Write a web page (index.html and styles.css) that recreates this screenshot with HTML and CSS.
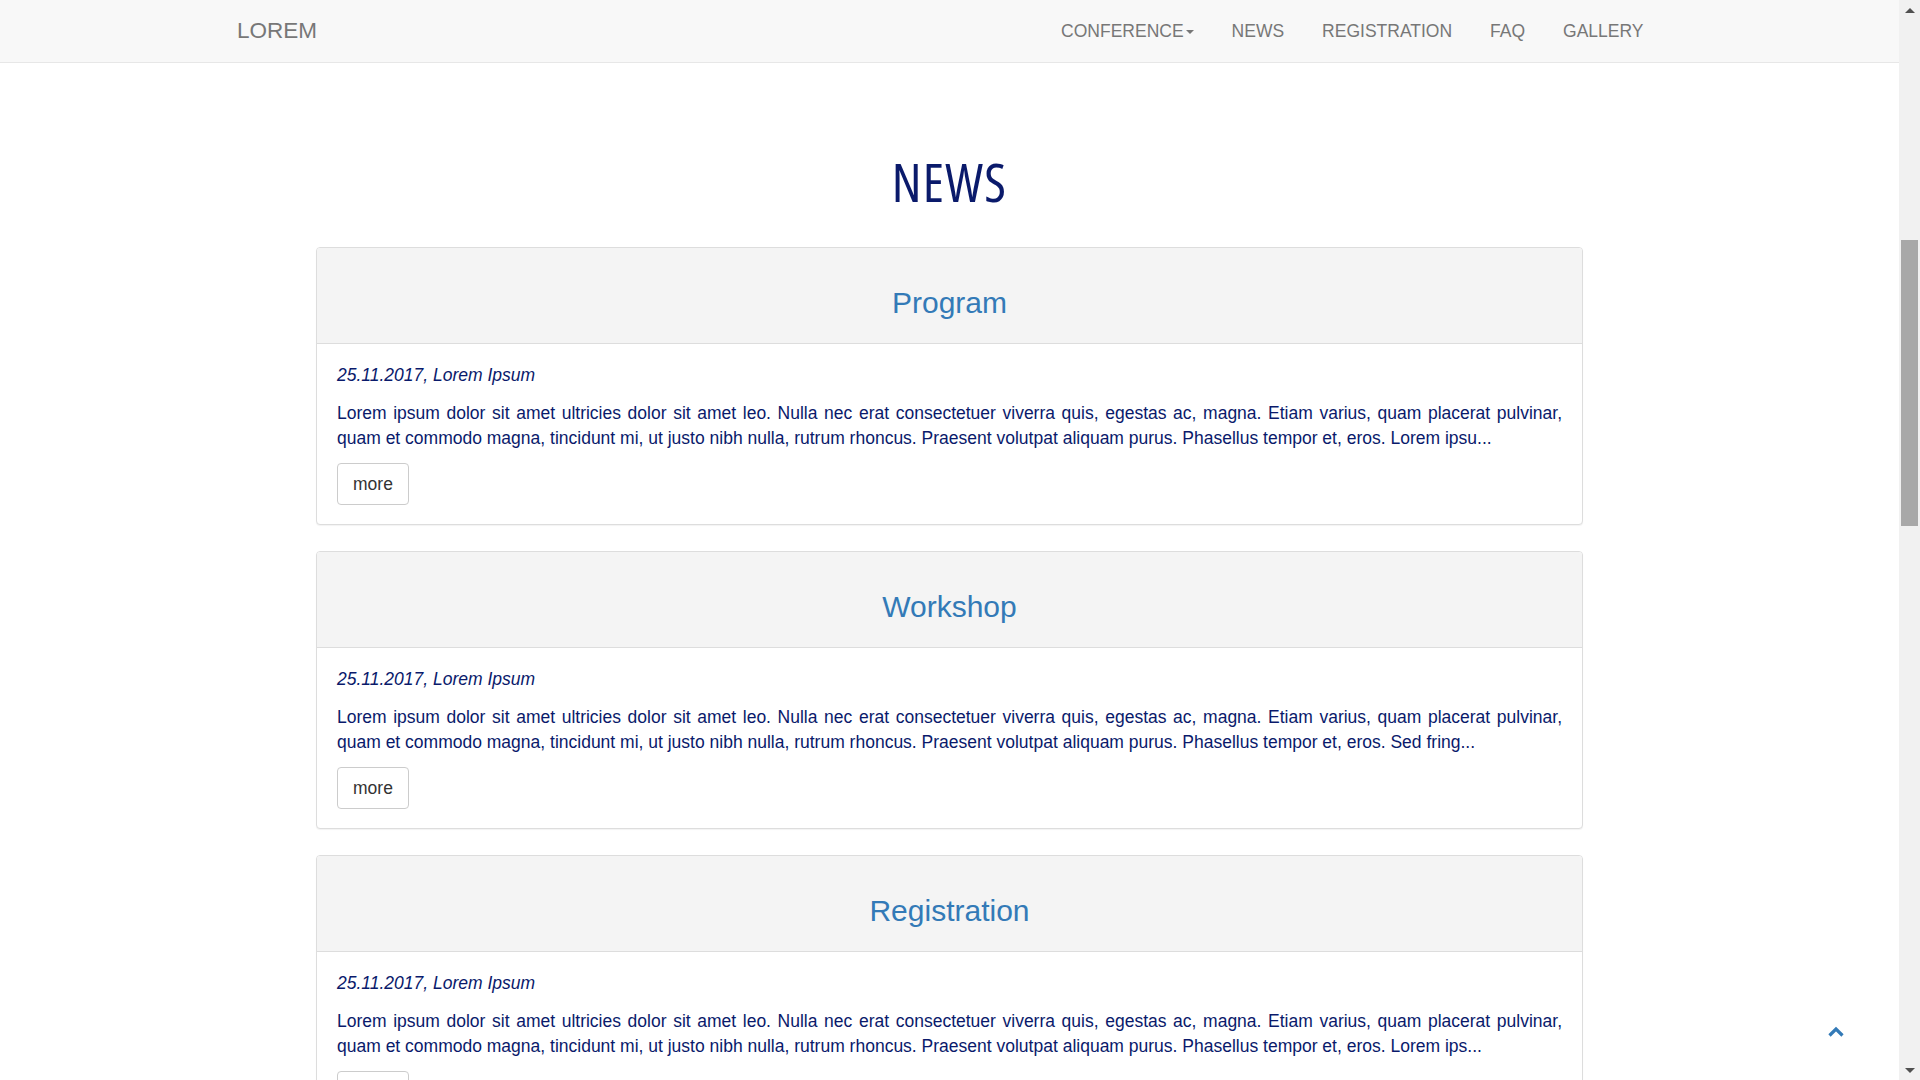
FILE: index.html
```html
<!DOCTYPE html>
<html lang="en">
<head>
<meta charset="utf-8">
<title>News</title>
<link rel="stylesheet" href="styles.css">
</head>
<body>
<div class="screen">
  <div class="page">
    <header class="navbar">
      <a class="brand" href="#">LOREM</a>
      <ul class="nav">
        <li><a href="#">CONFERENCE</a><span class="caret"></span></li>
        <li><a href="#">NEWS</a></li>
        <li><a href="#">REGISTRATION</a></li>
        <li><a href="#">FAQ</a></li>
        <li><a href="#">GALLERY</a></li>
      </ul>
    </header>
    <main class="content">
      <h1 class="title">NEWS</h1>
      <div class="panels">
        <section class="panel">
          <div class="panel-heading"><h2>Program</h2></div>
          <div class="panel-body">
            <p class="date">25.11.2017, Lorem Ipsum</p>
            <p class="text">Lorem ipsum dolor sit amet ultricies dolor sit amet leo. Nulla nec erat consectetuer viverra quis, egestas ac, magna. Etiam varius, quam placerat pulvinar, quam et commodo magna, tincidunt mi, ut justo nibh nulla, rutrum rhoncus. Praesent volutpat aliquam purus. Phasellus tempor et, eros. Lorem ipsu...</p>
            <button class="btn">more</button>
          </div>
        </section>
        <section class="panel">
          <div class="panel-heading"><h2>Workshop</h2></div>
          <div class="panel-body">
            <p class="date">25.11.2017, Lorem Ipsum</p>
            <p class="text">Lorem ipsum dolor sit amet ultricies dolor sit amet leo. Nulla nec erat consectetuer viverra quis, egestas ac, magna. Etiam varius, quam placerat pulvinar, quam et commodo magna, tincidunt mi, ut justo nibh nulla, rutrum rhoncus. Praesent volutpat aliquam purus. Phasellus tempor et, eros. Sed fring...</p>
            <button class="btn">more</button>
          </div>
        </section>
        <section class="panel">
          <div class="panel-heading"><h2>Registration</h2></div>
          <div class="panel-body">
            <p class="date">25.11.2017, Lorem Ipsum</p>
            <p class="text">Lorem ipsum dolor sit amet ultricies dolor sit amet leo. Nulla nec erat consectetuer viverra quis, egestas ac, magna. Etiam varius, quam placerat pulvinar, quam et commodo magna, tincidunt mi, ut justo nibh nulla, rutrum rhoncus. Praesent volutpat aliquam purus. Phasellus tempor et, eros. Lorem ips...</p>
            <button class="btn">more</button>
          </div>
        </section>
      </div>
    </main>
  </div>
  <div class="scrollbar">
    <div class="sb-btn"><span class="sb-up"></span></div>
    <div class="sb-track"><div class="sb-thumb"></div></div>
    <div class="sb-btn"><span class="sb-down"></span></div>
  </div>
</div>
<a class="to-top" href="#"><svg width="16" height="11" viewBox="0 0 16 11"><path d="M1.5 9.5 L8 3 L14.5 9.5" fill="none" stroke="#337ab7" stroke-width="3.2"/></svg></a>
</body>
</html>
```
FILE: styles.css
```css
html, body {
  margin: 0;
  padding: 0;
  height: 100%;
  overflow: hidden;
  background: #fff;
}
body {
  font-family: "Liberation Sans", Arial, sans-serif;
}
.screen {
  display: flex;
  height: 1080px;
  width: 1920px;
}
.page {
  flex: 1;
  min-width: 0;
  overflow: hidden;
}
.navbar {
  height: 62px;
  background: #f8f8f8;
  border-bottom: 1px solid #e7e7e7;
  display: flex;
  align-items: center;
  justify-content: space-between;
  padding: 0 237px 0 222px;
}
.brand {
  padding: 0 15px;
  font-size: 22.5px;
  color: #777;
  text-decoration: none;
  line-height: 62px;
}
.nav {
  list-style: none;
  margin: 0;
  padding: 0;
  display: flex;
}
.nav li {
  display: flex;
  align-items: center;
  padding: 0 19px;
  height: 62px;
}
.nav li:last-child {
  padding-right: 18.5px;
}
.nav a {
  font-family: "Liberation Sans", Arial, sans-serif;
  font-size: 17.5px;
  color: #777;
  text-decoration: none;
  line-height: 20px;
}
.caret {
  display: inline-block;
  width: 0;
  height: 0;
  margin-left: 2px;
  margin-top: 1px;
  border-top: 4px solid #777;
  border-left: 4px solid transparent;
  border-right: 4px solid transparent;
}
.content {
  padding-top: 93px;
}
.title {
  margin: 0 0 39px;
  text-align: center;
  font-family: "Open Sans", sans-serif;
  font-stretch: 87.5%;
  font-weight: 400;
  font-size: 53px;
  line-height: 52px;
  letter-spacing: 1.3px;
  color: #0a1a6b;
}
.panels {
  width: 1267px;
  margin: 0 auto;
}
.panel {
  border: 1px solid #ddd;
  border-radius: 4px;
  margin-bottom: 26px;
  box-shadow: 0 1px 1px rgba(0,0,0,0.05);
  background: #fff;
}
.panel-heading {
  background: #f4f4f4;
  border-bottom: 1px solid #ddd;
  border-radius: 3px 3px 0 0;
  height: 96px;
  box-sizing: border-box;
  padding-top: 38px;
}
.panel-heading h2 {
  margin: 0;
  text-align: center;
  font-weight: 400;
  font-size: 30px;
  line-height: 33px;
  color: #337ab7;
}
.panel-body {
  padding: 19px 20px 19px;
}
.date {
  margin: 0;
  font-style: italic;
  font-size: 17.5px;
  line-height: 24px;
  color: #0a1a6b;
}
.text {
  margin: 14px 0 13px;
  font-size: 17.5px;
  line-height: 24.5px;
  text-align: justify;
  color: #0a1a6b;
}
.btn {
  display: block;
  font-family: "Liberation Sans", Arial, sans-serif;
  font-size: 17.5px;
  line-height: 26px;
  padding: 7px 15px;
  background: #fff;
  color: #333;
  border: 1px solid #ccc;
  border-radius: 4px;
}
.scrollbar {
  width: 21px;
  flex: none;
  background: #f1f1f1;
  display: flex;
  flex-direction: column;
}
.sb-btn {
  height: 21px;
  display: flex;
  align-items: center;
  justify-content: center;
}
.sb-up {
  width: 0; height: 0;
  border-bottom: 5px solid #505050;
  border-left: 5px solid transparent;
  border-right: 5px solid transparent;
  margin-top: -1px;
}
.sb-down {
  width: 0; height: 0;
  border-top: 5px solid #505050;
  border-left: 5px solid transparent;
  border-right: 5px solid transparent;
  margin-top: 1px;
}
.sb-track {
  flex: 1;
  padding: 0 2px;
}
.sb-thumb {
  margin-top: 219px;
  height: 286px;
  background: #a8a8a8;
}
.to-top {
  position: fixed;
  right: 76px;
  bottom: 43px;
  display: block;
  line-height: 0;
}
```
